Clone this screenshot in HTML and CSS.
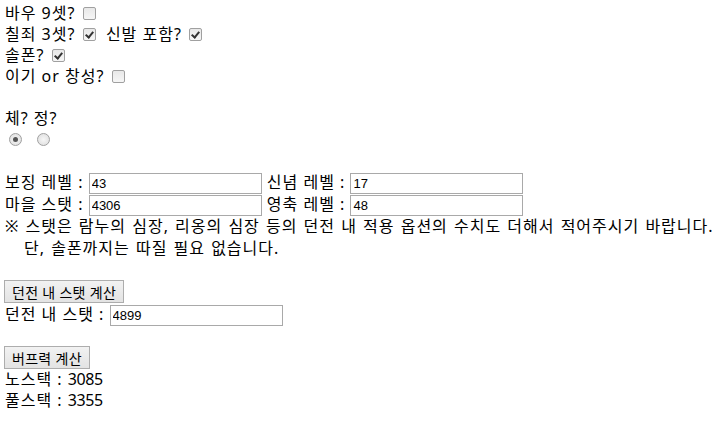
FILE: index.html
```html
<!DOCTYPE html>
<html lang="ko">
<head>
    <meta charset="UTF-8">
    <title>버프력 계산기</title>
    <link rel="stylesheet" href="styles.css">
</head>
<body>
<div class="calc">
    <div class="row">바우 9셋? <input type="checkbox" class="chk"></div>
    <div class="row">칠죄 3셋? <input type="checkbox" class="chk" checked> &nbsp;신발 포함? <input type="checkbox" class="chk" checked></div>
    <div class="row">솔폰? <input type="checkbox" class="chk" checked></div>
    <div class="row">이기 or 창성? <input type="checkbox" class="chk"></div>
    <div class="blank"></div>
    <div class="row">체? 정?</div>
    <div class="row radios">
        <input type="radio" name="type" class="rad" checked>
        <input type="radio" name="type" class="rad">
    </div>
    <div class="blank"></div>
    <div class="row field">보징 레벨 : <input type="text" class="txt" value="43"> 신념 레벨 : <input type="text" class="txt" value="17"></div>
    <div class="row field">마을 스탯 : <input type="text" class="txt" value="4306"> 영축 레벨 : <input type="text" class="txt" value="48"></div>
    <div class="notice">※ 스탯은 람누의 심장, 리옹의 심장 등의 던전 내 적용 옵션의 수치도 더해서 적어주시기 바랍니다.<br>단, 솔폰까지는 따질 필요 없습니다.</div>
    <div class="blank"></div>
    <div class="btn-row"><button class="btn">던전 내 스탯 계산</button></div>
    <div class="row field">던전 내 스탯 : <input type="text" class="txt" value="4899"></div>
    <div class="blank"></div>
    <div class="btn-row"><button class="btn">버프력 계산</button></div>
    <div class="row">노스택 : <span class="result" id="nostack">3085</span></div>
    <div class="row">풀스택 : <span class="result" id="fullstack">3355</span></div>
</div>
</body>
</html>
```
FILE: styles.css
```css
html,body{
    margin:0;
    padding:0;
    background:#fff;
}
body{
    padding:3px 5px;
    font-family:"Noto Sans","Noto Sans CJK KR",sans-serif;
    font-size:16px;
    letter-spacing:1px;
    color:#000;
}
.row{
    height:21px;
    line-height:21px;
    white-space:nowrap;
}
.blank{
    height:21px;
}
.chk{
    -webkit-appearance:none;
    appearance:none;
    width:13px;
    height:13px;
    margin:0 0 0 2px;
    vertical-align:-1px;
    border:1px solid #a0a0a0;
    border-radius:2px;
    background:linear-gradient(#e8e8e8,#f6f6f6);
    box-sizing:border-box;
    position:relative;
}
.chk:checked::before{
    content:'';
    position:absolute;
    left:3px;
    top:1px;
    width:3px;
    height:6px;
    border:solid #333;
    border-width:0 2px 2px 0;
    transform:rotate(40deg);
}
.radios{
    padding-left:4px;
    font-size:0;
}
.rad{
    -webkit-appearance:none;
    appearance:none;
    width:13px;
    height:13px;
    margin:4px 14px 0 0;
    vertical-align:top;
    border:1px solid #a0a0a0;
    border-radius:50%;
    background:radial-gradient(#f6f6f6,#dcdcdc);
    box-sizing:border-box;
    position:relative;
}
.rad:checked::before{
    content:'';
    position:absolute;
    left:3px;
    top:3px;
    width:5px;
    height:5px;
    border-radius:50%;
    background:#555;
}
.field{
    height:22px;
    line-height:22px;
}
.txt{
    width:173px;
    height:21px;
    box-sizing:border-box;
    border:1px solid #a9a9a9;
    padding:0 2px;
    margin:0;
    font-family:"Liberation Sans",Arial,sans-serif;
    font-size:13px;
    letter-spacing:0;
    vertical-align:middle;
}
.notice{
    line-height:22px;
    padding-left:19px;
    text-indent:-19px;
    word-spacing:1px;
    white-space:nowrap;
}
.result{
    letter-spacing:-0.4px;
}
.btn-row{
    height:23px;
}
.btn{
    height:23px;
    padding:0 7px;
    margin:0 0 0 -1px;
    border:1px solid #adadad;
    background:linear-gradient(#f2f2f2,#e3e3e3);
    font-family:"Noto Sans","Noto Sans CJK KR",sans-serif;
    font-size:14px;
    letter-spacing:0.3px;
    color:#000;
    vertical-align:top;
}
```
